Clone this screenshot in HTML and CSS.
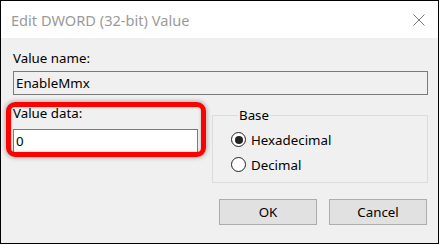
FILE: index.html
```html
<!DOCTYPE html>
<html lang="en">
<head>
  <meta charset="UTF-8">
  <title>Edit DWORD (32-bit) Value</title>
  <link rel="stylesheet" href="styles.css">
</head>
<body>
  <div class="window">
    <div class="title-bar">
      <span class="title">Edit DWORD (32-bit) Value</span>
      <svg class="close" width="12" height="12" viewBox="0 0 12 12">
        <path d="M0.5 0.5 L11.5 11.5 M11.5 0.5 L0.5 11.5" stroke="#777" stroke-width="1" fill="none"/>
      </svg>
    </div>
    <div class="content">
      <div class="label">Value name:</div>
      <div class="field readonly">EnableMmx</div>
      <div class="row">
        <div class="data-col">
          <div class="label">Value data:</div>
          <div class="field data">0</div>
        </div>
        <fieldset class="base">
          <legend>Base</legend>
          <div class="radio-row"><span class="radio checked"></span>Hexadecimal</div>
          <div class="radio-row"><span class="radio"></span>Decimal</div>
        </fieldset>
      </div>
      <div class="buttons">
        <div class="btn">OK</div>
        <div class="btn">Cancel</div>
      </div>
    </div>
  </div>
</body>
</html>
```

FILE: styles.css
```css
*{
  box-sizing: border-box;
}
body{
  margin: 0;
  background: #fff;
  font-family: "Noto Sans", "Open Sans", sans-serif;
  font-size: 13.3px;
  color: #000;
}
.window{
  width: 439px;
  height: 244px;
  border: 1px solid #000;
  background: #f0f0f0;
}
.title-bar{
  height: 37px;
  background: #fff;
  display: flex;
  align-items: center;
  justify-content: space-between;
  padding: 0 13px 0 10px;
}
.title{
  font-size: 14.6px;
  color: #9a9a9a;
  margin-top: 1px;
}
.close{
  display: block;
  margin-top: 1px;
}
.content{
  padding: 12px 10px 0 12px;
}
.label{
  line-height: 16px;
  height: 16px;
}
.field{
  height: 24px;
  border: 1px solid #7a7a7a;
  padding: 0 2px;
  line-height: 22px;
  background: #fff;
}
.field.readonly{
  margin-top: 5px;
  background: #f0f0f0;
}
.row{
  display: grid;
  grid-template-columns: 185px 1fr;
  column-gap: 14px;
  align-items: start;
}
.data-col{
  position: relative;
  padding-top: 10px;
}
.data-col .field{
  margin-top: 8px;
}
/* red highlight drawn over the value data field */
.data-col::after{
  content: "";
  position: absolute;
  left: -7px;
  right: -8px;
  top: 7px;
  bottom: -4px;
  border: 5px solid #ff0000;
  border-radius: 9px;
  box-shadow: 0 0 4px 1px rgba(0,0,0,0.28), inset 0 0 3px rgba(0,0,0,0.25);
}
.base{
  margin: 12px 0 0 0;
  padding: 4px 0 5px 18px;
  border: 1px solid #dcdcdc;
  min-width: 0;
}
.base legend{
  margin-left: 7px;
  padding: 0 1px;
  line-height: 16px;
}
.radio-row{
  display: flex;
  align-items: center;
  gap: 5px;
  height: 25px;
}
.radio{
  width: 15px;
  height: 15px;
  border: 1.5px solid #222;
  border-radius: 50%;
  background: #fff;
  display: flex;
  align-items: center;
  justify-content: center;
}
.radio.checked::before{
  content: "";
  width: 8px;
  height: 8px;
  border-radius: 50%;
  background: #222;
}
.buttons{
  display: flex;
  justify-content: flex-end;
  gap: 12px;
  margin: 16px 1px 0 0;
}
.btn{
  width: 98px;
  height: 26px;
  border: 1px solid #adadad;
  background: #e1e1e1;
  text-align: center;
  line-height: 24px;
}
```
